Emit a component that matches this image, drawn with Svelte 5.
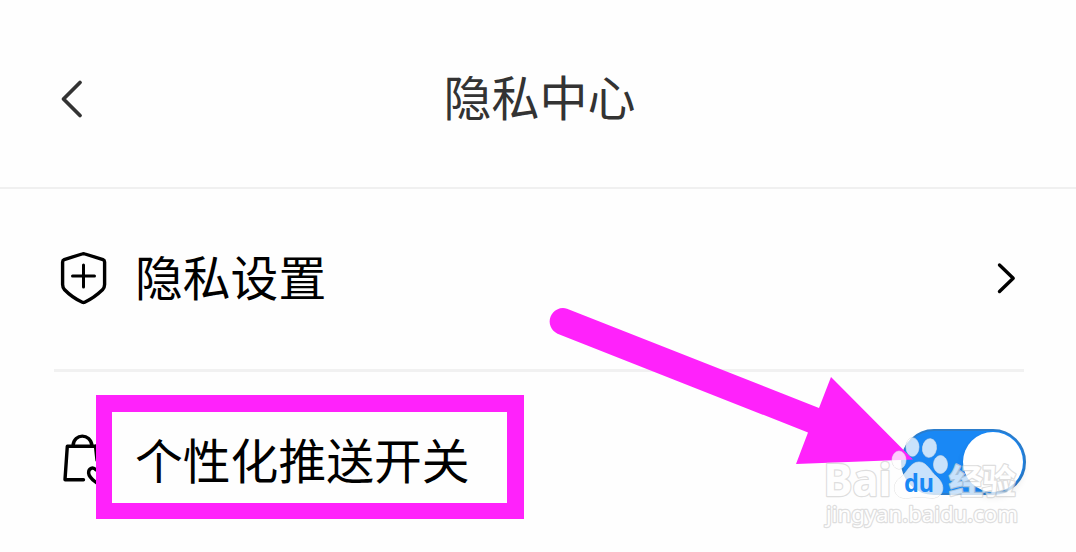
<script lang="ts">
  interface Props {
    title?: string;
    pushEnabled?: boolean;
  }

  let { title = '隐私中心', pushEnabled = true }: Props = $props();

  let enabled = $state(pushEnabled);
</script>

<div class="page">
  <header class="header">
    <button class="back" aria-label="返回">
      <svg width="28" height="44" viewBox="0 0 28 44">
        <path d="M24 6.5 7.5 23 24 39.5" fill="none" stroke="currentColor" stroke-width="3.8" stroke-linecap="round" stroke-linejoin="round" />
      </svg>
    </button>
    <h1>{title}</h1>
  </header>

  <main>
    <div class="row row-link">
      <svg class="icon" width="60" height="60" viewBox="54 249 60 60">
        <path d="M82 254Q83.5 253.4 85 254L103 259.6Q104.6 260.2 104.6 262V284.5Q104.6 287.5 102.5 289.8Q94 298 84.7 302.2Q83.5 302.8 82.3 302.2Q72.5 298 64.6 289.8Q62.6 287.5 62.6 284.5V262Q62.6 260.2 64.2 259.6Z" />
        <path d="M72.5 276H94.5M83.5 265V287" stroke-width="3" />
      </svg>
      <span class="label">隐私设置</span>
      <svg class="chevron" width="24" height="36" viewBox="994 261 24 36">
        <path d="M999.5 265 1013.2 278.2 999.5 291.5" />
      </svg>
    </div>

    <div class="row row-switch">
      <svg class="icon" width="60" height="60" viewBox="54 432 60 60">
        <path d="M98 446.3H67.3L65 479.7H83.5M73 445.5C74 433 90.5 433 92 445.5M95.5 446 97 460" />
        <path d="M104 474C102 468 97 467 96 470C93 466.5 88.5 468 88.6 473C89 478 94 480.5 98 484" />
      </svg>
      <span class="label">个性化推送开关</span>
      <button class="switch" class:on={enabled} role="switch" aria-checked={enabled} aria-label="个性化推送开关" onclick={() => (enabled = !enabled)}>
        <span class="knob"></span>
      </button>
    </div>
  </main>

  <div class="highlight"></div>

  <svg class="overlay" width="1076" height="552" viewBox="0 0 1076 552">
    <path class="arrow" d="M567 308.7 819 408 831 377 913 459.5 796 464 808 432.5 557.5 333.7A13.4 13.4 0 0 1 567 308.7Z" />

    <g class="watermark">
      <text x="823.5" y="496" class="brand" textLength="68" lengthAdjust="spacingAndGlyphs">Bai</text>
      <ellipse cx="899" cy="460" rx="7" ry="9" />
      <ellipse cx="912.5" cy="447" rx="6.5" ry="9.3" />
      <ellipse cx="929.5" cy="448" rx="7" ry="9.3" transform="rotate(8 929.5 448)" />
      <ellipse cx="940.5" cy="464.5" rx="7" ry="9" />
      <path d="M919 462C927 462 930 471 937 477C948 487 942 499 931 498C923 497 915 497 908 498C894 500 890 485 900 478C908 472 910 462 919 462Z" />
      <text x="949" y="493.5" class="cjk" textLength="67">经验</text>
      <text x="826" y="522" class="url" textLength="192" lengthAdjust="spacingAndGlyphs">jingyan.baidu.com</text>
    </g>
    <text x="904" y="491.5" class="du" textLength="30" lengthAdjust="spacingAndGlyphs">du</text>
  </svg>
</div>

<style>
  :global(body) {
    margin: 0;
    background: #fefefe;
  }

  .page {
    position: relative;
    width: 1076px;
    height: 552px;
    overflow: hidden;
    background: #fefefe;
    font-family: "Noto Sans CJK SC", sans-serif;
    color: #000;
  }

  .header {
    display: grid;
    grid-template-columns: 100px 1fr 100px;
    align-items: center;
    box-sizing: border-box;
    height: 189px;
    padding-bottom: 1px;
    border-bottom: 2px solid #f0f0f0;
    color: #333;
  }

  .back {
    display: flex;
    margin: 9px 0 0 56px;
    padding: 0;
    border: none;
    background: none;
    color: inherit;
    cursor: pointer;
  }

  h1 {
    margin: 4px 0 0 3px;
    font-size: 48px;
    font-weight: 400;
    line-height: 60px;
    text-align: center;
  }

  main {
    padding: 0 52px 0 54px;
  }

  .row {
    display: flex;
    align-items: center;
    box-sizing: border-box;
    height: 183px;
  }

  .row-link {
    padding-right: 6px;
    border-bottom: 3px solid #f1f1f1;
  }

  .row-switch {
    height: 180px;
  }

  .icon,
  .chevron {
    flex-shrink: 0;
    fill: none;
    stroke: #000;
    stroke-width: 3.4;
    stroke-linecap: round;
    stroke-linejoin: round;
  }

  .icon {
    margin-right: 21px;
  }

  .label {
    flex: 1;
    padding-bottom: 6px;
    font-size: 47.8px;
    line-height: 60px;
  }

  .switch {
    display: flex;
    align-items: center;
    box-sizing: border-box;
    width: 125px;
    height: 66px;
    margin-right: -2px;
    padding: 0;
    border: 2px solid #2b7dcc;
    border-radius: 33px;
    background: #ccc;
    cursor: pointer;
  }

  .switch.on {
    justify-content: flex-end;
    background: #1988f5;
  }

  .knob {
    width: 60px;
    height: 60px;
    margin: 0 1px;
    border-radius: 50%;
    background: #fff;
    box-shadow: 0 5px 7px rgba(0, 0, 0, 0.1);
  }

  .highlight {
    position: absolute;
    top: 395px;
    left: 96px;
    box-sizing: border-box;
    width: 428px;
    height: 124px;
    border: solid #ff22fb;
    border-width: 17px 17px 16px 16px;
  }

  .overlay {
    position: absolute;
    top: 0;
    left: 0;
    pointer-events: none;
  }

  .arrow {
    fill: #ff22fb;
  }

  .watermark {
    fill: #fff;
    stroke: #d4d4d4;
    stroke-width: 2.4;
    stroke-linejoin: round;
    paint-order: stroke;
    opacity: 0.76;
  }

  .watermark ellipse,
  .watermark path {
    stroke-width: 1;
  }

  .brand {
    font: 700 45px "Noto Sans", sans-serif;
  }

  .cjk {
    font: 700 34px "Noto Sans CJK SC", sans-serif;
  }

  .url {
    font: 400 22px "Noto Sans", sans-serif;
  }

  .du {
    font: 700 25px "Noto Sans", sans-serif;
    fill: #1988f5;
  }
</style>
